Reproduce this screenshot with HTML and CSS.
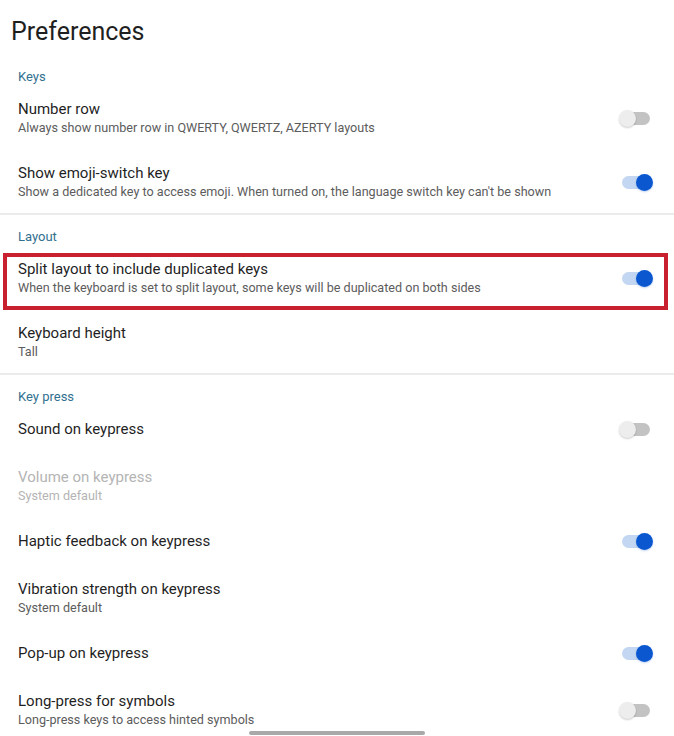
FILE: index.html
```html
<!DOCTYPE html>
<html lang="en">
<head>
<meta charset="utf-8">
<title>Preferences</title>
<link rel="stylesheet" href="styles.css">
</head>
<body>
<div class="page">
  <h1 class="page-title">Preferences</h1>

  <section class="group">
    <div class="group-label">Keys</div>
    <div class="row two">
      <div class="text">
        <div class="title">Number row</div>
        <div class="sub">Always show number row in QWERTY, QWERTZ, AZERTY layouts</div>
      </div>
      <span class="switch"></span>
    </div>
    <div class="row two">
      <div class="text">
        <div class="title">Show emoji-switch key</div>
        <div class="sub">Show a dedicated key to access emoji. When turned on, the language switch key can't be shown</div>
      </div>
      <span class="switch on"></span>
    </div>
  </section>

  <section class="group">
    <div class="group-label">Layout</div>
    <div class="row two highlighted">
      <div class="text">
        <div class="title">Split layout to include duplicated keys</div>
        <div class="sub">When the keyboard is set to split layout, some keys will be duplicated on both sides</div>
      </div>
      <span class="switch on"></span>
      <span class="highlight-box"></span>
    </div>
    <div class="row two">
      <div class="text">
        <div class="title">Keyboard height</div>
        <div class="sub">Tall</div>
      </div>
    </div>
  </section>

  <section class="group last">
    <div class="group-label">Key press</div>
    <div class="row">
      <div class="text">
        <div class="title">Sound on keypress</div>
      </div>
      <span class="switch"></span>
    </div>
    <div class="row two disabled">
      <div class="text">
        <div class="title">Volume on keypress</div>
        <div class="sub">System default</div>
      </div>
    </div>
    <div class="row">
      <div class="text">
        <div class="title">Haptic feedback on keypress</div>
      </div>
      <span class="switch on"></span>
    </div>
    <div class="row two">
      <div class="text">
        <div class="title">Vibration strength on keypress</div>
        <div class="sub">System default</div>
      </div>
    </div>
    <div class="row">
      <div class="text">
        <div class="title">Pop-up on keypress</div>
      </div>
      <span class="switch on"></span>
    </div>
    <div class="row two">
      <div class="text">
        <div class="title">Long-press for symbols</div>
        <div class="sub">Long-press keys to access hinted symbols</div>
      </div>
      <span class="switch"></span>
    </div>
  </section>
</div>
<div class="home-indicator"></div>
</body>
</html>
```
FILE: styles.css
```css
html, body {
  margin: 0;
  padding: 0;
  height: 736px;
  overflow: hidden;
  background: #ffffff;
}
body {
  font-family: Roboto, "Noto Sans", Arial, sans-serif;
  color: #1f1f1f;
}
.page {
  display: flex;
  flex-direction: column;
}
.page-title {
  margin: 0;
  padding: 16px 11px 7px;
  font-size: 25px;
  line-height: 32px;
  font-weight: 400;
  color: #1f1f1f;
}
.group {
  border-bottom: 2px solid #ececec;
}
.group.last {
  border-bottom: none;
}
.group-label {
  padding: 14px 18px 0;
  font-size: 13px;
  line-height: 16px;
  color: #32708f;
}
.row {
  position: relative;
  display: flex;
  align-items: center;
  justify-content: space-between;
  padding: 14px 21px 14px 18px;
  min-height: 20px;
}
.row.two {
  padding-bottom: 12px;
}
.text {
  display: flex;
  flex-direction: column;
}
.title {
  font-size: 15px;
  line-height: 20px;
  color: #1f1f1f;
}
.sub {
  font-size: 12.6px;
  line-height: 18px;
  color: #5c5c5c;
}
.disabled .title,
.disabled .sub {
  color: #b4b4b4;
}
.switch {
  position: relative;
  flex: none;
  width: 34px;
  height: 17px;
}
.switch::before {
  content: "";
  position: absolute;
  left: 3px;
  right: 3px;
  top: 2px;
  height: 13px;
  border-radius: 7px;
  background: #c3c3c3;
}
.switch::after {
  content: "";
  position: absolute;
  left: 0;
  top: 0;
  width: 17px;
  height: 17px;
  border-radius: 50%;
  background: #ededed;
  box-shadow: 0 1px 2px rgba(0, 0, 0, 0.2);
}
.switch.on::before {
  background: #c3d7f2;
}
.switch.on::after {
  left: auto;
  right: 0;
  background: #0b57d0;
  box-shadow: 0 1px 2px rgba(11, 87, 208, 0.25);
}
.highlight-box {
  position: absolute;
  left: 3px;
  right: 6px;
  top: 8px;
  bottom: -1px;
  border: 4px solid #c8202e;
  pointer-events: none;
}
.home-indicator {
  position: fixed;
  left: 249px;
  width: 176px;
  top: 731px;
  height: 4px;
  border-radius: 2px;
  background: #a9a9a9;
}
```
